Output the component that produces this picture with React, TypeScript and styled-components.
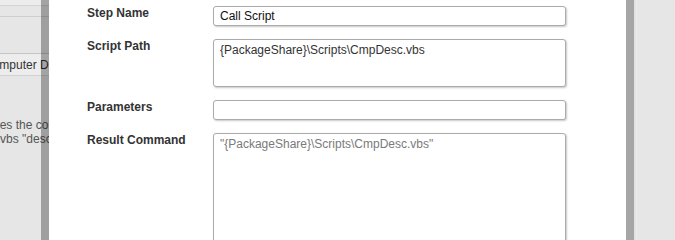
import React from "react";
import styled, { createGlobalStyle } from "styled-components";

const GlobalStyle = createGlobalStyle`
  html, body, #root {
    margin: 0;
    padding: 0;
    height: 100%;
    overflow: hidden;
    background: #e6e6e6;
  }
  body {
    font-family: "Liberation Sans", Arial, sans-serif;
  }
`;

const Screen = styled.div`
  display: flex;
  width: 100%;
  height: 100vh;
  overflow: hidden;
`;

const Backdrop = styled.div`
  width: 49px;
  flex: none;
  background: #e6e6e6;
  overflow: hidden;
  display: flex;
  flex-direction: column;
`;

const BackLine = styled.div<{ $h: number; $bg: string; $line: string }>`
  height: ${(p) => p.$h}px;
  flex: none;
  background: ${(p) => p.$bg};
  border-bottom: 1px solid ${(p) => p.$line};
`;

const BackField = styled.div`
  height: 21px;
  flex: none;
  background: #ededed;
  border-top: 1px solid #c4c4c4;
  border-bottom: 1px solid #d2d2d2;
  display: flex;
  align-items: center;
  margin-left: -16px;
  font-size: 12px;
  color: #333;
  white-space: nowrap;
`;

const BackText = styled.div<{ $shift: number; $top?: number }>`
  margin-top: ${(p) => p.$top ?? 0}px;
  margin-left: ${(p) => -p.$shift}px;
  font-size: 12px;
  line-height: 14px;
  color: #555;
  white-space: nowrap;
`;

const Modal = styled.div`
  flex: none;
  width: 593px;
  margin-left: -8px;
  background: #fff;
  background-clip: padding-box;
  border-left: 8px solid rgba(0, 0, 0, 0.3);
  border-right: 8px solid rgba(0, 0, 0, 0.28);
  box-sizing: border-box;
  padding: 6px 0 0 38px;
  position: relative;
  z-index: 1;
`;

const Form = styled.div`
  display: grid;
  grid-template-columns: 126px 353px;
  row-gap: 13px;
`;

const Label = styled.label`
  font-size: 12px;
  line-height: 14px;
  font-weight: bold;
  color: #333;
`;

const fieldBase = `
  box-sizing: border-box;
  width: 100%;
  margin: 0;
  border: 1px solid #ababab;
  border-radius: 3px;
  box-shadow: 1px 1px 2px rgba(0, 0, 0, 0.22);
  background: #fff;
  font-family: "Liberation Sans", Arial, sans-serif;
  font-size: 12px;
  outline: none;
`;

const TextInput = styled.input`
  ${fieldBase}
  height: 20px;
  padding: 0 6px;
  color: #111;
`;

const TextArea = styled.textarea<{ $h: number; $muted?: boolean }>`
  ${fieldBase}
  display: block;
  height: ${(p) => p.$h}px;
  padding: 3px 6px;
  line-height: 14px;
  resize: none;
  overflow: hidden;
  color: ${(p) => (p.$muted ? "#7a7a7a" : "#333")};
`;

const RightSide = styled.div`
  flex: 1;
  background: #e6e6e6;
  box-shadow: inset 2px 0 0 #e2e2e2, inset 3px 0 0 #ececec;
`;

export default function App() {
  return (
    <>
      <GlobalStyle />
      <Screen>
        <Backdrop>
          <BackLine $h={5} $bg="#ececec" $line="#d4d4d4" />
          <BackLine $h={10} $bg="#e6e6e6" $line="#cfcfcf" />
          <BackLine $h={35} $bg="#e6e6e6" $line="#e6e6e6" />
          <BackField>Computer Description</BackField>
          <BackText $shift={37} $top={42}>
            Executes the computer description script
          </BackText>
          <BackText $shift={56}>CmpDesc.vbs "description"</BackText>
        </Backdrop>
        <Modal>
          <Form>
            <Label htmlFor="stepName">Step Name</Label>
            <TextInput id="stepName" readOnly value="Call Script" />

            <Label htmlFor="scriptPath">Script Path</Label>
            <TextArea
              id="scriptPath"
              readOnly
              $h={48}
              value={"{PackageShare}\\Scripts\\CmpDesc.vbs"}
            />

            <Label htmlFor="parameters">Parameters</Label>
            <TextInput id="parameters" readOnly value="" />

            <Label htmlFor="resultCommand">Result Command</Label>
            <TextArea
              id="resultCommand"
              readOnly
              $h={130}
              $muted
              value={'"{PackageShare}\\Scripts\\CmpDesc.vbs"'}
            />
          </Form>
        </Modal>
        <RightSide />
      </Screen>
    </>
  );
}
